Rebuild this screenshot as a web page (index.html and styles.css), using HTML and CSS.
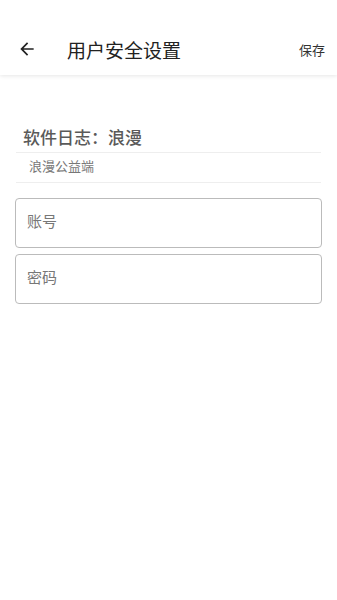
FILE: index.html
```html
<!DOCTYPE html>
<html lang="zh-CN">
<head>
  <meta charset="UTF-8" />
  <meta name="viewport" content="width=device-width, initial-scale=1" />
  <title>用户安全设置</title>
  <link rel="stylesheet" href="styles.css">
</head>
<body>
  <div class="toolbar">
    <a class="back" href="#">
      <svg viewBox="0 0 24 24" width="20" height="20">
        <path d="M20 11H7.83l5.59-5.59L12 4l-8 8 8 8 1.41-1.41L7.83 13H20v-2z" fill="#222"/>
      </svg>
    </a>
    <div class="title">用户安全设置</div>
    <a class="save" href="#">保存</a>
  </div>

  <div class="content">
    <div class="log-title">软件日志：浪漫</div>
    <div class="log-sub">浪漫公益端</div>

    <div class="fields">
      <input type="text" class="field" placeholder="账号" />
      <input type="password" class="field" placeholder="密码" />
    </div>
  </div>
</body>
</html>
```

FILE: styles.css
```css
/* Global Styles */
body {
  margin: 0;
  padding: 0;
  background: #fff;
  font-family: "Noto Sans CJK SC", "Noto Sans", sans-serif;
  color: #222;
}
/* Top bar (status bar space on top) */
.toolbar {
  height: 75px;
  display: flex;
  align-items: center;
  padding: 23px 12px 0 17px;
  box-shadow: 0 1px 4px rgba(0, 0, 0, 0.1);
  box-sizing: border-box;
}
.back {
  display: flex;
  width: 20px;
  height: 20px;
  margin-top: -1px;
}
.title {
  margin-left: 30px;
  font-size: 19px;
  flex: 1;
  color: #222;
}
.save {
  font-size: 13px;
  color: #333;
  text-decoration: none;
}
/* Log info */
.content {
  padding: 0 15px;
}
.log-title {
  margin: 51px 1px 0 1px;
  padding: 0 0 0 7px;
  height: 26px;
  line-height: 22px;
  font-size: 17px;
  font-weight: 500;
  color: #5a5a5a;
  border-bottom: 1px solid #eee;
}
.log-sub {
  margin: 0 1px;
  padding-left: 13px;
  height: 29px;
  line-height: 26px;
  font-size: 13px;
  color: #777;
  border-bottom: 1px solid #eee;
}
/* Inputs */
.fields {
  margin-top: 15px;
  display: flex;
  flex-direction: column;
  gap: 6px;
}
.field {
  height: 50px;
  width: 100%;
  box-sizing: border-box;
  border: 1px solid #bbb;
  border-radius: 4px;
  padding: 0 11px 5px;
  font-family: "Noto Sans CJK SC", "Noto Sans", sans-serif;
  font-size: 15px;
  outline: none;
}
.field::placeholder {
  color: #777;
}
```
